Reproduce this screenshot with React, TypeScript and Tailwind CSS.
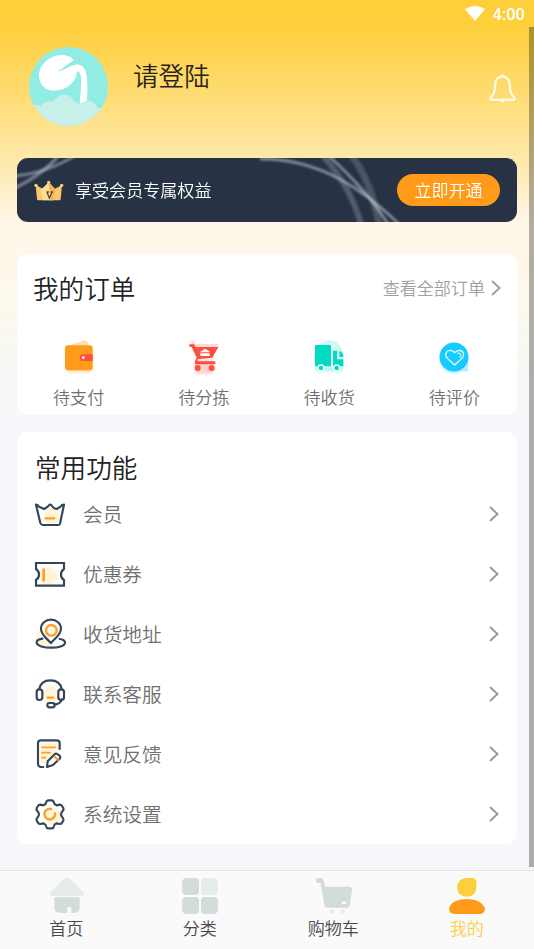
import type { ReactNode } from "react";

function Avatar() {
  return (
    <svg className="h-[79px] w-[79px] shrink-0" viewBox="87 142 237 237">
      <defs>
        <clipPath id="avatar">
          <circle cx="205.500" cy="260.500" r="118.500" />
        </clipPath>
      </defs>
      <g clipPath="url(#avatar)">
        <rect x="80" y="140" width="250" height="250" fill="#91ece3" />
        <path d="M221 181C206 162 172 161 145 179C118 198 109 227 124 252C137 277 171 277 198 264C218 254 230 236 231 215C241 215 244 229 244 248L239 310H260C264 276 263 246 259 224C255 202 243 192 226 195C207 199 192 211 173 216Z" fill="#fff" />
        <path d="M80 330Q98 311 122 318Q136 302 160 305Q175 284 194 285Q216 287 223 306Q232 307 238 313Q255 300 273 305Q290 312 293 327Q305 321 330 335V390H80Z" fill="#c8f0eb" />
      </g>
    </svg>
  );
}

function Bell() {
  return (
    <svg className="h-[30px] w-[27px]" viewBox="0 0 27 30" fill="none" stroke="#fffaf0" strokeWidth="2.100" strokeLinejoin="round" strokeLinecap="round">
      <path d="M13.500 3.500C8.500 3.500 6.200 7.800 6.200 12.300C6.200 18.800 4.800 21.800 1.700 24.500Q.6 26.500 2.500 26.700H24.500Q26.400 26.500 25.300 24.500C22.200 21.800 20.800 18.800 20.800 12.300C20.800 7.800 18.500 3.500 13.500 3.500Z" />
      <path d="M12.700 2.500H14.300M12.700 28.300H14.300" />
    </svg>
  );
}

function BannerLines() {
  return (
    <svg className="absolute inset-0 h-full w-full" viewBox="0 0 500 64" fill="none">
      <defs>
        <filter id="soft" x="-20%" y="-20%" width="140%" height="140%">
          <feGaussianBlur stdDeviation=".8" />
        </filter>
      </defs>
      <g stroke="#c9d0da" filter="url(#soft)">
        <path d="M-2 18C18 16 38 10 59-3" strokeWidth="3" opacity=".48" />
        <path d="M-2 30C14 22 30 12 42-3" strokeWidth="3.200" opacity=".5" />
        <path d="M243 1C303 0 348 33 382 66" strokeWidth="3" opacity=".55" />
        <path d="M312-2C339 23 356 42 371 66" strokeWidth="2.800" opacity=".55" />
        <path d="M306-2C325 19 337 41 344 66" strokeWidth="6" opacity=".26" />
        <path d="M335-2C349 17 357 38 362 66" strokeWidth="7" opacity=".22" />
      </g>
    </svg>
  );
}

function GoldCrown() {
  return (
    <svg className="h-[21px] w-[30px] shrink-0" viewBox="101 88 90 63">
      <path d="M106 103L127 114L145 94L164 114L185 103L181 146Q180 149 177 149H114Q111 149 110 146Z" fill="#fac56d" />
      <path d="M145 96L157 149H127L120 118Z" fill="#ffdc93" />
      <path d="M145 96L164 116L158 149H151Z" fill="#efb45b" />
      <g fill="#f9cd7e"><circle cx="107" cy="104" r="5" /><circle cx="145" cy="95" r="5" /><circle cx="184" cy="104" r="5" /></g>
      <path d="M138 124H146M140 125L147 142L155 125M151 124H158" stroke="#5a4a37" strokeWidth="4" fill="none" />
    </svg>
  );
}

function Wallet() {
  return (
    <svg className="h-10 w-10" viewBox="177 290 120 120">
      <rect x="198" y="328" width="80" height="68" rx="10" fill="#ff9b19" opacity=".35" className="blur-[5px]" />
      <path d="M207 316L253 300Q260 299 263 306L267 320H207Z" fill="#ffdcb3" />
      <rect x="195" y="315" width="83" height="75" rx="9" fill="#ff9b19" />
      <path d="M278 342H247Q240 342 240 352Q240 362 247 362H278Z" fill="#ff4d3e" />
      <circle cx="250" cy="352" r="4" fill="#fff" />
    </svg>
  );
}

function OrderCart() {
  return (
    <svg className="h-10 w-10" viewBox="551 290 120 120">
      <path d="M585 360H640V400H585Z" fill="#ff4d3e" opacity=".25" className="blur-[5px]" />
      <path d="M571 303H585V311H654V322H580Z" fill="#ffdbd8" />
      <path d="M566 312H581L586 320H654L636 352L592 357V363H645V372H584Q581 367 586 358L589 352L574 320H568Z" fill="#ff4d3e" />
      <path d="M598 336L614 325L631 336ZM600 339H628V347H600Z" fill="#fff" />
      <circle cx="592" cy="383" r="9" fill="#ff4d3e" />
      <circle cx="634" cy="383" r="9" fill="#ff4d3e" />
    </svg>
  );
}

function Truck() {
  return (
    <svg className="h-10 w-10" viewBox="126 290 120 120">
      <rect x="146" y="338" width="80" height="55" fill="#02dbc4" opacity=".3" className="blur-[5px]" />
      <circle cx="186" cy="342" r="42" fill="#d3f8f3" />
      <path d="M147 314H188Q192 314 192 318V378H147Q144 378 144 374V318Q144 314 147 314Z" fill="#02dbc4" />
      <path d="M198 331H210V357H229V378H198ZM217 333Q229 333 229 350H217Z" fill="#02dbc4" />
      <path d="M192 378V314H198V378Z" fill="#f3fffd" />
      <g fill="#02dbc4" stroke="#fff" strokeWidth="4"><circle cx="162" cy="383" r="9" /><circle cx="209" cy="383" r="9" /></g>
    </svg>
  );
}

function Heart() {
  return (
    <svg className="h-10 w-10" viewBox="500 290 120 120">
      <circle cx="560" cy="359" r="39" fill="#16cbff" opacity=".4" className="blur-[5px]" />
      <path d="M578 367H603V393H578Z" fill="#b9edff" />
      <circle cx="560" cy="350" r="43.500" fill="#16cbff" />
      <path d="M562 374L541 355C529 343 538 330 548 330Q557 330 562 337Q567 330 577 330C588 331 594 344 583 355Z" fill="none" stroke="#fff" strokeWidth="3.500" strokeLinejoin="round" />
      <path d="M571 338Q581 337 581 346Q581 350 577 352" fill="none" stroke="#fff" strokeWidth="3" strokeLinecap="round" />
    </svg>
  );
}

function MenuIcon({ children, viewBox }: { children: ReactNode; viewBox: string }) {
  return (
    <svg className="h-8 w-8 shrink-0" viewBox={viewBox} fill="none" stroke="#34465a" strokeWidth="6.500" strokeLinecap="round" strokeLinejoin="round">
      {children}
    </svg>
  );
}

const crown = (
  <MenuIcon viewBox="72 204 96 96">
    <circle cx="126" cy="257" r="25" fill="#fff4da" stroke="none" />
    <path d="M78 224Q84 224 87 230L102 237Q113 232 119 224Q123 222 126 228Q131 236 140 237L153 229Q155 224 162 224L150 281Q149 285 144 285H99Q93 285 91 279Z" />
    <path d="M107 265H133" stroke="#ff9d25" />
  </MenuIcon>
);

const coupon = (
  <MenuIcon viewBox="72 384 96 96">
    <circle cx="115" cy="438" r="28" fill="#fff4da" stroke="none" />
    <path d="M78 399H162V417C150 425 150 442 162 450V467H78V450C90 442 90 425 78 417Z" strokeLinejoin="miter" />
    <path d="M101 419V451" stroke="#ff9d25" strokeWidth="8" />
  </MenuIcon>
);

const address = (
  <MenuIcon viewBox="72 22 96 96">
    <circle cx="106" cy="80" r="28" fill="#fff4da" stroke="none" />
    <path d="M123 97C111 84 93 72 93 54A30 27 0 0 1 153 54C153 72 134 84 123 97Z" fill="#fff" />
    <circle cx="124" cy="59" r="16" stroke="#ff9d25" fill="#fff8e7" strokeWidth="7" />
    <path d="M97 84C86 86 79 90 80 96C82 116 165 116 165 96C165 90 157 86 149 85" />
  </MenuIcon>
);

const service = (
  <MenuIcon viewBox="72 204 96 96">
    <path d="M122 224Q143 232 146 259Q142 283 122 284Q101 277 98 251Q103 230 122 224" fill="#fff4da" stroke="none" />
    <path d="M88 237C91 220 104 211 121 211C139 211 152 220 155 237M155 268Q153 281 133 284" />
    <rect x="80" y="238" width="17" height="32" rx="8" />
    <rect x="145" y="238" width="17" height="32" rx="8" />
    <rect x="112" y="279" width="22" height="13" rx="6" />
    <path d="M113 263H130" stroke="#ff9d25" />
  </MenuIcon>
);

const feedback = (
  <MenuIcon viewBox="72 384 96 96">
    <path d="M101 396H133Q145 399 146 418L134 429L100 465L91 458V405Q91 396 101 396" fill="#fff4da" stroke="none" />
    <path d="M149 417V399Q149 391 140 391H92Q84 391 84 399V461Q84 469 92 471H100" />
    <path d="M96 412H136M96 428H120M96 443H106" stroke="#ff9d25" strokeWidth="5" />
    <path d="M111 471L113 454L134 433Q139 428 146 435Q154 440 149 446L129 465Z" fill="#fff" />
    <path d="M134 440L144 450" stroke="#ff9d25" />
  </MenuIcon>
);

const settings = (
  <MenuIcon viewBox="72 564 96 96">
    <circle cx="130" cy="618" r="25" fill="#fff4da" stroke="none" />
    <path d="M114 571H126Q130 571 131 576Q132 583 140 586L149 584Q154 584 156 588L160 594Q162 598 158 603Q153 608 153 613Q153 618 158 623Q162 628 160 632L156 638Q154 642 149 642L140 640Q132 643 131 650Q130 655 126 655H114Q110 655 109 650Q108 643 100 640L91 642Q86 642 84 638L80 632Q78 628 82 623Q87 618 87 613Q87 608 82 603Q78 598 80 594L84 588Q86 584 91 584L100 586Q108 583 109 576Q110 571 114 571Z" />
    <path d="M123 597A16 16 0 1 0 135 610" stroke="#ff9d25" strokeWidth="7" />
  </MenuIcon>
);

function Chevron({ className }: { className: string }) {
  return (
    <svg className={className} viewBox="0 0 10 16" fill="none" stroke="currentColor" strokeWidth="1.900">
      <path d="M1 1L8.500 8L1 15" />
    </svg>
  );
}

const orders = [
  { label: "待支付", icon: <Wallet /> },
  { label: "待分拣", icon: <OrderCart /> },
  { label: "待收货", icon: <Truck /> },
  { label: "待评价", icon: <Heart /> },
];

const functions = [
  { label: "会员", icon: crown },
  { label: "优惠券", icon: coupon },
  { label: "收货地址", icon: address },
  { label: "联系客服", icon: service },
  { label: "意见反馈", icon: feedback },
  { label: "系统设置", icon: settings },
];

const tabs = [
  {
    label: "首页",
    color: "text-[#484848]",
    icon: (
      <svg className="h-9 w-9" viewBox="146 54 108 108">
        <path d="M188 58Q200 50 212 58L251 99Q254 107 246 108H153Q145 107 149 99Z" fill="#e5ecea" />
        <path d="M162 112H238V142Q238 159 220 159H213V145Q213 140 207 140Q201 140 201 145V159H182Q162 159 162 142Z" fill="#d2dcda" />
      </svg>
    ),
  },
  {
    label: "分类",
    color: "text-[#484848]",
    icon: (
      <svg className="h-9 w-9" viewBox="0 0 108 108" fill="#d2dcda">
        <path d="M16 0H40Q51 0 51 11V38Q51 51 38 51H16Q0 51 0 37V16Q0 0 16 0Z" />
        <path d="M68 0H94Q108 0 108 14V37Q108 51 94 51H68Q57 51 57 40V11Q57 0 68 0Z" fill="#e5ecea" />
        <path d="M16 57H40Q51 57 51 68V95Q51 108 38 108H16Q0 108 0 92V73Q0 57 16 57Z" />
        <path d="M68 57H94Q108 57 108 73V92Q108 108 92 108H70Q57 108 57 95V68Q57 57 68 57Z" />
      </svg>
    ),
  },
  {
    label: "购物车",
    color: "text-[#484848]",
    icon: (
      <svg className="h-9 w-9" viewBox="144 54 108 108">
        <path d="M149 54H160Q164 54 166 59L171 80H244Q252 81 252 90L246 135Q244 143 237 143H176Q170 142 169 136L158 69H149Q144 67 144 61Q144 55 149 54Z" fill="#d2dcda" />
        <rect x="221" y="125" width="14" height="7" rx="3.500" fill="#fff" />
        <circle cx="191" cy="155" r="7" fill="#e5ecea" /><circle cx="225" cy="155" r="7" fill="#e5ecea" />
      </svg>
    ),
  },
  {
    label: "我的",
    color: "text-[#fdd047]",
    icon: (
      <svg className="h-9 w-9" viewBox="546 54 108 108">
        <path d="M600 54H616Q628 54 628 67V84Q626 109 600 110Q572 109 570 83Q571 55 600 54Z" fill="#fdcf3c" />
        <path d="M546 147C550 125 575 117 600 117C628 117 650 128 654 148Q653 162 637 162H563Q547 162 546 147Z" fill="#ff9b19" />
      </svg>
    ),
  },
];

export default function App() {
  return (
    <div className="relative flex h-[949px] w-[534px] flex-col overflow-hidden bg-[#f6f7fa] font-['Noto_Sans_CJK_SC',sans-serif] font-[350]">
      <div className="flex flex-1 flex-col bg-[linear-gradient(180deg,#fdcf3b_0px,#fdcf3b_27px,#fee7a2_150px,#fff7e9_226px,#fff7e9_255px,#fcf9ec_300px,#f6f8f8_390px,#f6f7fa_430px)]">
        <header className="flex h-[27px] shrink-0 items-center justify-end gap-2 pr-[9px] text-white">
          <svg className="mb-px h-[15px] w-5" viewBox="0 0 20 15" fill="currentColor">
            <path d="M0 3Q10-3 20 3L10 15Z" />
          </svg>
          <span className="mt-0.5 font-[Roboto] text-[16.500px] leading-5 font-medium">4:00</span>
        </header>

        <section className="flex h-[131px] shrink-0 pr-[18px] pl-[29px]">
          <div className="pt-5"><Avatar /></div>
          <h1 className="ml-[25px] pt-[30px] text-[25.600px] leading-9 font-[350] text-[#27231a]">请登陆</h1>
          <div className="ml-auto pt-[46px]"><Bell /></div>
        </section>

        <section className="relative mx-[17px] flex h-16 shrink-0 items-center overflow-hidden rounded-[11px] bg-[#273245] pr-[17px] pl-[17px]">
          <BannerLines />
          <div className="relative flex w-full items-center">
            <GoldCrown />
            <span className="mb-px ml-[11px] text-[17.070px] leading-6 text-white">享受会员专属权益</span>
            <button className="ml-auto h-8 w-[103px] rounded-full bg-[#ff9b19] text-[17.070px] leading-8 font-[350] text-white">立即开通</button>
          </div>
        </section>

        <section className="mx-[17px] mt-8 h-[161px] shrink-0 rounded-[11px] bg-white">
          <div className="flex h-[68px] items-center justify-between pr-4 pl-4">
            <h2 className="text-[25.600px] leading-9 font-[350] text-[#222]">我的订单</h2>
            <div className="flex items-center gap-[6px] text-[#a0a0a0]">
              <span className="text-[17.070px] leading-6">查看全部订单</span>
              <Chevron className="h-4 w-[10px]" />
            </div>
          </div>
          <div className="-ml-px grid grid-cols-4 pt-[15px]">
            {orders.map((o) => (
              <div key={o.label} className="flex flex-col items-center">
                {o.icon}
                <span className="mt-2 text-[17.070px] leading-6 text-[#707070]">{o.label}</span>
              </div>
            ))}
          </div>
        </section>

        <section className="mx-[17px] mt-[17px] h-[412px] shrink-0 rounded-[11px] bg-white pt-[18px] pr-[17px] pl-[17px]">
          <h2 className="pl-px text-[25.600px] leading-[34px] font-[350] text-[#222]">常用功能</h2>
          <div>
            {functions.map((f) => (
              <div key={f.label} className="flex h-[60px] items-center">
                {f.icon}
                <span className="ml-[17px] text-[19.700px] leading-7 text-[#707070]">{f.label}</span>
                <Chevron className="mr-px ml-auto h-4 w-[10px] text-[#999]" />
              </div>
            ))}
          </div>
        </section>
      </div>

      <nav className="grid h-[79px] shrink-0 grid-cols-4 border-t border-[#e1e3e6] bg-[#fafafa]">
        {tabs.map((t) => (
          <div key={t.label} className={`flex flex-col items-center pt-[7px] ${t.color}`}>
            {t.icon}
            <span className="mt-0.5 mr-px text-[17.070px] leading-6">{t.label}</span>
          </div>
        ))}
      </nav>

      <div className="absolute top-[27px] right-0 h-[840px] w-[5px] bg-black/30" />
    </div>
  );
}
